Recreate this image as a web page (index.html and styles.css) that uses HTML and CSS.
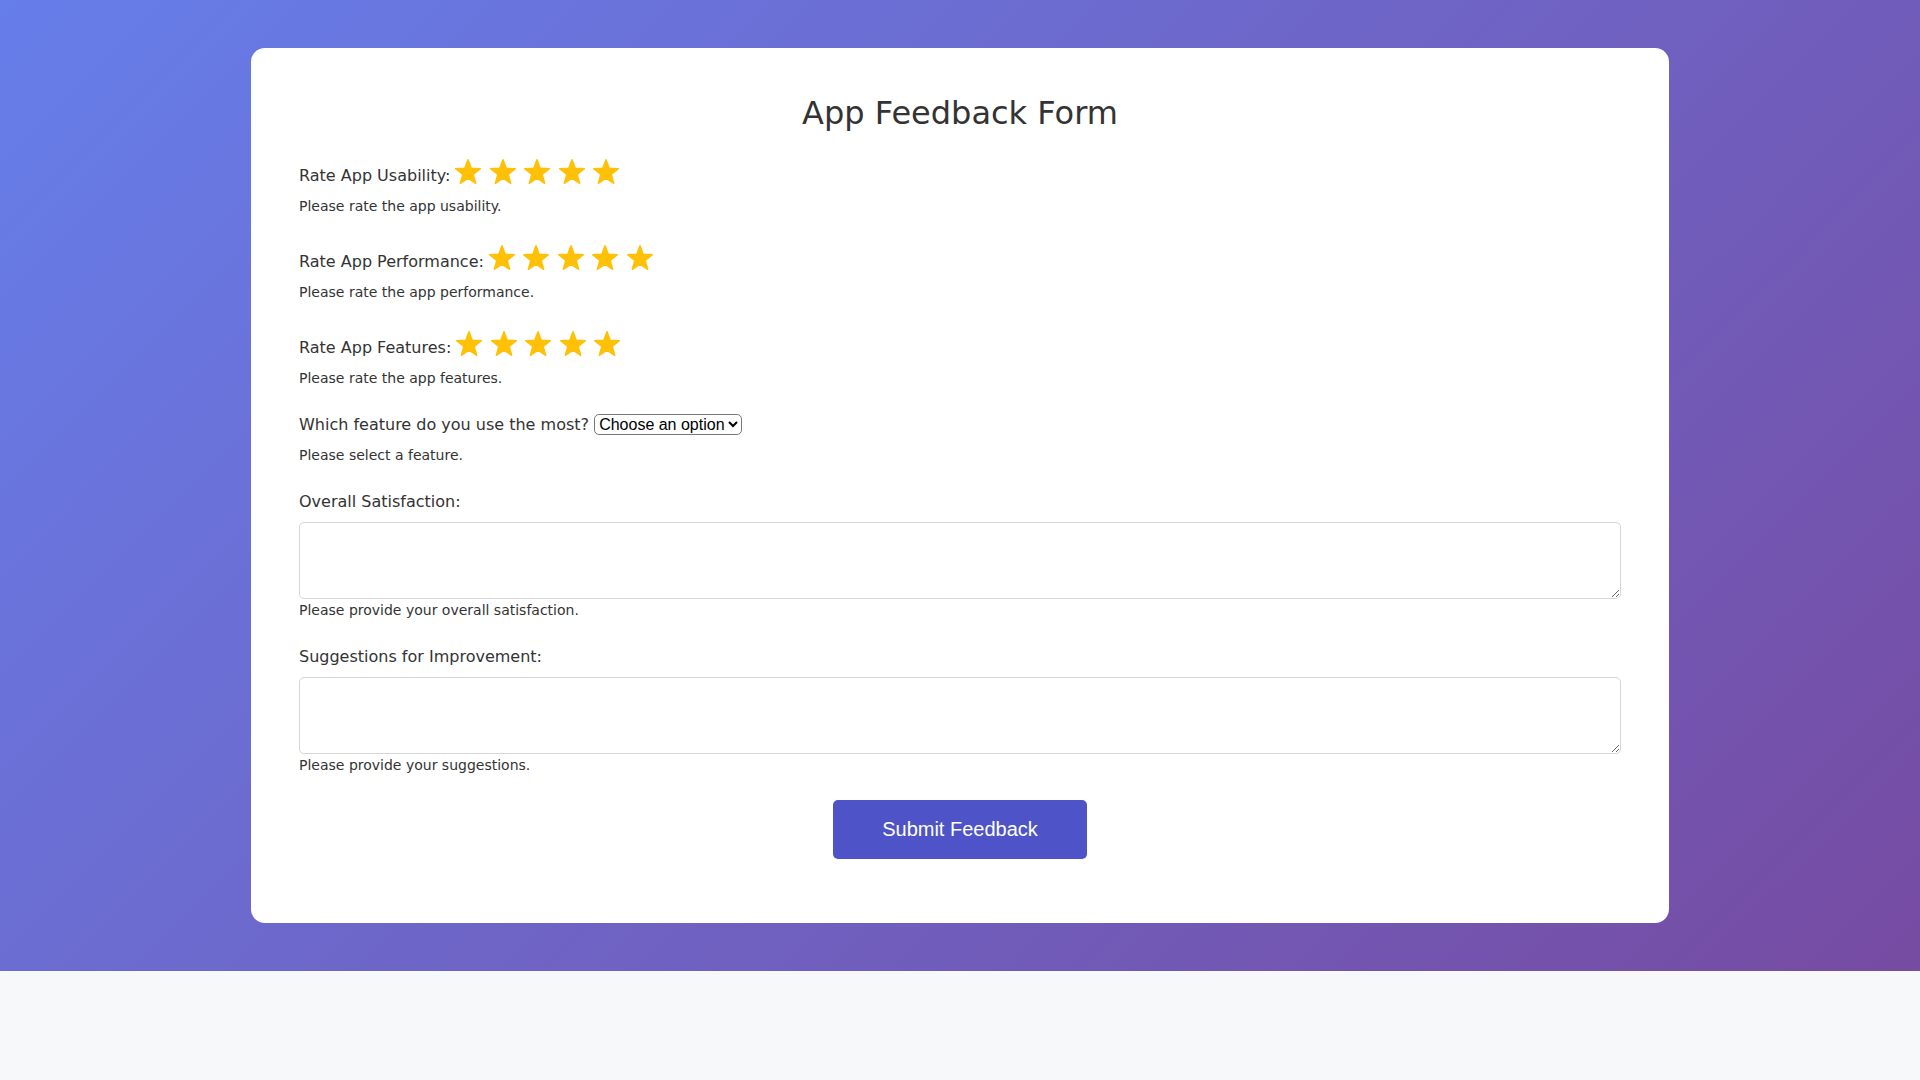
FILE: index.html
```html
<!DOCTYPE html>
<html lang="en">
<head>
<meta charset="utf-8">
<title>App Feedback Form</title>
<link rel="stylesheet" href="styles.css">
</head>
<body>
<div class="page">
  <form class="card">
    <h1 class="title">App Feedback Form</h1>

    <div class="group">
      <div class="row"><label class="label">Rate App Usability:</label><span class="stars"><svg class="star" viewBox="0 0 26 27"><polygon points="13,2.75 16.21,11.33 25.36,11.73 18.19,17.44 20.64,26.27 13,21.21 5.36,26.27 7.81,17.44 0.64,11.73 9.79,11.33"/></svg><svg class="star" viewBox="0 0 26 27"><polygon points="13,2.75 16.21,11.33 25.36,11.73 18.19,17.44 20.64,26.27 13,21.21 5.36,26.27 7.81,17.44 0.64,11.73 9.79,11.33"/></svg><svg class="star" viewBox="0 0 26 27"><polygon points="13,2.75 16.21,11.33 25.36,11.73 18.19,17.44 20.64,26.27 13,21.21 5.36,26.27 7.81,17.44 0.64,11.73 9.79,11.33"/></svg><svg class="star" viewBox="0 0 26 27"><polygon points="13,2.75 16.21,11.33 25.36,11.73 18.19,17.44 20.64,26.27 13,21.21 5.36,26.27 7.81,17.44 0.64,11.73 9.79,11.33"/></svg><svg class="star" viewBox="0 0 26 27"><polygon points="13,2.75 16.21,11.33 25.36,11.73 18.19,17.44 20.64,26.27 13,21.21 5.36,26.27 7.81,17.44 0.64,11.73 9.79,11.33"/></svg></span></div>
      <div class="help">Please rate the app usability.</div>
    </div>

    <div class="group">
      <div class="row"><label class="label">Rate App Performance:</label><span class="stars"><svg class="star" viewBox="0 0 26 27"><polygon points="13,2.75 16.21,11.33 25.36,11.73 18.19,17.44 20.64,26.27 13,21.21 5.36,26.27 7.81,17.44 0.64,11.73 9.79,11.33"/></svg><svg class="star" viewBox="0 0 26 27"><polygon points="13,2.75 16.21,11.33 25.36,11.73 18.19,17.44 20.64,26.27 13,21.21 5.36,26.27 7.81,17.44 0.64,11.73 9.79,11.33"/></svg><svg class="star" viewBox="0 0 26 27"><polygon points="13,2.75 16.21,11.33 25.36,11.73 18.19,17.44 20.64,26.27 13,21.21 5.36,26.27 7.81,17.44 0.64,11.73 9.79,11.33"/></svg><svg class="star" viewBox="0 0 26 27"><polygon points="13,2.75 16.21,11.33 25.36,11.73 18.19,17.44 20.64,26.27 13,21.21 5.36,26.27 7.81,17.44 0.64,11.73 9.79,11.33"/></svg><svg class="star" viewBox="0 0 26 27"><polygon points="13,2.75 16.21,11.33 25.36,11.73 18.19,17.44 20.64,26.27 13,21.21 5.36,26.27 7.81,17.44 0.64,11.73 9.79,11.33"/></svg></span></div>
      <div class="help">Please rate the app performance.</div>
    </div>

    <div class="group group-tight">
      <div class="row"><label class="label">Rate App Features:</label><span class="stars"><svg class="star" viewBox="0 0 26 27"><polygon points="13,2.75 16.21,11.33 25.36,11.73 18.19,17.44 20.64,26.27 13,21.21 5.36,26.27 7.81,17.44 0.64,11.73 9.79,11.33"/></svg><svg class="star" viewBox="0 0 26 27"><polygon points="13,2.75 16.21,11.33 25.36,11.73 18.19,17.44 20.64,26.27 13,21.21 5.36,26.27 7.81,17.44 0.64,11.73 9.79,11.33"/></svg><svg class="star" viewBox="0 0 26 27"><polygon points="13,2.75 16.21,11.33 25.36,11.73 18.19,17.44 20.64,26.27 13,21.21 5.36,26.27 7.81,17.44 0.64,11.73 9.79,11.33"/></svg><svg class="star" viewBox="0 0 26 27"><polygon points="13,2.75 16.21,11.33 25.36,11.73 18.19,17.44 20.64,26.27 13,21.21 5.36,26.27 7.81,17.44 0.64,11.73 9.79,11.33"/></svg><svg class="star" viewBox="0 0 26 27"><polygon points="13,2.75 16.21,11.33 25.36,11.73 18.19,17.44 20.64,26.27 13,21.21 5.36,26.27 7.81,17.44 0.64,11.73 9.79,11.33"/></svg></span></div>
      <div class="help">Please rate the app features.</div>
    </div>

    <div class="group">
      <div class="row"><label class="label" for="feature">Which feature do you use the most?</label> <select id="feature" class="select"><option>Choose an option</option><option>Dashboard</option><option>Reports</option><option>Notifications</option></select></div>
      <div class="help">Please select a feature.</div>
    </div>

    <div class="group">
      <label class="label block" for="satisfaction">Overall Satisfaction:</label>
      <textarea id="satisfaction" class="textarea"></textarea>
      <div class="help help-tight">Please provide your overall satisfaction.</div>
    </div>

    <div class="group group-last">
      <label class="label block" for="suggestions">Suggestions for Improvement:</label>
      <textarea id="suggestions" class="textarea"></textarea>
      <div class="help help-tight">Please provide your suggestions.</div>
    </div>

    <div class="actions">
      <button type="submit" class="submit">Submit Feedback</button>
    </div>
  </form>
</div>
</body>
</html>
```

FILE: styles.css
```css
html {
  background: #f7f8fa;
}

body {
  margin: 0;
  font-family: "DejaVu Sans", sans-serif;
  color: #333;
}

.page {
  padding: 48px 0;
  background: linear-gradient(135deg, #667eea 0%, #764ba2 100%);
}

.card {
  box-sizing: border-box;
  width: 1418px;
  margin: 0 auto;
  padding: 46px 48px 48px;
  background: #fff;
  border-radius: 14px;
}

.title {
  margin: 0 0 25px;
  font-size: 32px;
  font-weight: normal;
  text-align: center;
  color: #333;
}

.group {
  margin-bottom: 29px;
}

.group-tight {
  margin-bottom: 28px;
}

.group-last {
  margin-bottom: 27px;
}

.row {
  font-size: 16px;
}

.label {
  font-size: 16px;
  color: #333;
}

.label.block {
  display: block;
}

.stars {
  margin-left: 5px;
}

.star {
  width: 26px;
  height: 27px;
  vertical-align: -3px;
  margin-right: 8.5px;
  fill: #ffc107;
  stroke: #ffc107;
  stroke-width: 1.5;
  stroke-linejoin: round;
}

.select {
  font-family: "Liberation Sans", Arial, sans-serif;
  font-size: 16px;
  color: #000;
  background: #fff;
  border: 1px solid #767676;
  border-radius: 5px;
  margin: 0 0 -3px;
}

.help {
  margin-top: 13px;
  font-size: 14px;
  color: #333;
}

.help-tight {
  margin-top: 3px;
}

.textarea {
  display: block;
  box-sizing: border-box;
  width: 100%;
  height: 77px;
  margin-top: 11px;
  border: 1px solid #d6d6d6;
  border-radius: 5px;
  padding: 8px;
  font-family: "DejaVu Sans", sans-serif;
  font-size: 14px;
}

.actions {
  text-align: center;
  padding-bottom: 16px;
}

.submit {
  font-family: "Liberation Sans", Arial, sans-serif;
  font-size: 20px;
  color: #fff;
  background: #4e54c8;
  border: none;
  border-radius: 5px;
  padding: 18px 49px;
  cursor: pointer;
}
```
